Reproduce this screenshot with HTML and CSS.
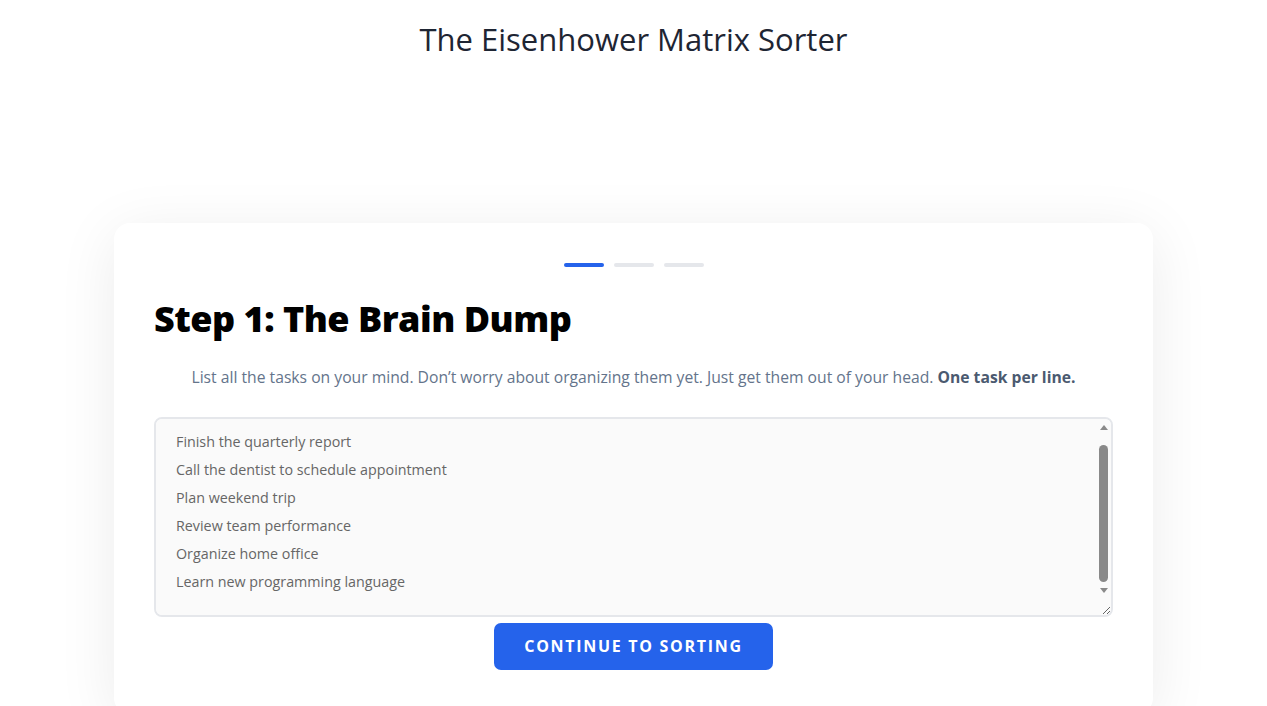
FILE: index.html
```html
<!DOCTYPE html>
<html lang="en">
<head>
<meta charset="utf-8">
<title>The Eisenhower Matrix Sorter</title>
<link rel="stylesheet" href="styles.css">
</head>
<body>
<header class="site-header">
  <h1 class="site-title">The Eisenhower Matrix Sorter</h1>
</header>
<main class="stage">
  <section class="card">
    <div class="progress">
      <span class="step active"></span>
      <span class="step"></span>
      <span class="step"></span>
    </div>
    <h2 class="card-title">Step 1: The Brain Dump</h2>
    <p class="lead">List all the tasks on your mind. Don’t worry about organizing them yet. Just get them out of your head. <strong>One task per line.</strong></p>
    <div class="tasks-wrap">
      <textarea class="tasks" spellcheck="false">
Finish the quarterly report
Call the dentist to schedule appointment
Plan weekend trip
Review team performance
Organize home office
Learn new programming language
</textarea>
      <div class="fake-scrollbar" aria-hidden="true">
        <span class="sb-arrow sb-up"></span>
        <span class="sb-thumb"></span>
        <span class="sb-arrow sb-down"></span>
      </div>
    </div>
    <div class="actions">
      <button class="btn-primary" type="button">Continue to Sorting</button>
    </div>
  </section>
</main>
</body>
</html>
```
FILE: styles.css
```css
* { box-sizing: border-box; }
html, body { margin: 0; padding: 0; background: #fff; }
body {
  font-family: "Open Sans", "Noto Sans", sans-serif;
  color: #1f2937;
  overflow: hidden;
}
.site-header {
  text-align: center;
  padding-top: 17px;
}
.site-title {
  margin: 0;
  font-family: "Open Sans", sans-serif;
  font-weight: 400;
  font-size: 31px;
  line-height: 44px;
  color: #1e2533;
}
.stage {
  padding-top: 162px;
}
.card {
  width: 1039px;
  margin: 0 auto;
  background: #fff;
  border-radius: 16px;
  padding: 40px 40px 44px;
  box-shadow: 0 10px 60px rgba(0, 0, 0, 0.08);
}
.progress {
  display: flex;
  justify-content: center;
  gap: 10px;
}
.step {
  width: 40px;
  height: 4px;
  border-radius: 2px;
  background: #e5e7eb;
}
.step.active { background: #2563eb; }
.card-title {
  margin: 28px 0 0;
  font-family: "Open Sans", sans-serif;
  font-weight: 800;
  font-size: 36px;
  line-height: 48px;
  color: #000;
  letter-spacing: -0.5px;
}
.lead {
  margin: 22px 0 28px;
  text-align: center;
  font-family: "Open Sans", sans-serif;
  font-size: 15.7px;
  line-height: 24px;
  color: #64748b;
}
.lead strong { color: #4b5a70; font-weight: 700; }
.tasks-wrap {
  position: relative;
}
.tasks {
  display: block;
  width: 100%;
  height: 200px;
  margin: 0;
  padding: 9px 36px 9px 20px;
  border: 2px solid #e5e7eb;
  border-radius: 8px;
  background: #fafafa;
  font-family: "Open Sans", sans-serif;
  font-size: 14.3px;
  line-height: 28px;
  color: #666;
  resize: vertical;
  overflow-y: auto;
}
.fake-scrollbar {
  position: absolute;
  top: 2px;
  right: 2px;
  width: 15px;
  height: 180px;
  display: flex;
  flex-direction: column;
  align-items: center;
  pointer-events: none;
}
.sb-arrow {
  width: 0;
  height: 0;
  border-left: 4px solid transparent;
  border-right: 4px solid transparent;
}
.sb-up {
  margin-top: 6px;
  border-bottom: 5px solid #8a8a8a;
}
.sb-down {
  border-top: 5px solid #8a8a8a;
}
.sb-thumb {
  width: 9px;
  height: 137px;
  margin: 15px 0 6px;
  border-radius: 5px;
  background: #898989;
}
.actions {
  display: flex;
  justify-content: center;
  margin-top: 6px;
}
.btn-primary {
  border: 0;
  border-radius: 7px;
  background: #2563eb;
  color: #fff;
  font-family: "Open Sans", sans-serif;
  font-weight: 700;
  font-size: 16px;
  letter-spacing: 1.7px;
  text-transform: uppercase;
  padding: 13px 30px;
  line-height: 21px;
  cursor: pointer;
}
```
